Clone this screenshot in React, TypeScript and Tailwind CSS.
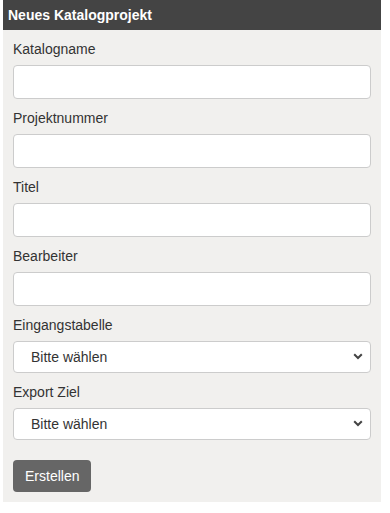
import React from "react";

function Field({ label }: { label: string }) {
  return (
    <div className="mb-[9px]">
      <div className="h-5 leading-5 text-[14px] text-[#333] mb-[6px]">{label}</div>
      <input className="block w-full h-[34px] bg-white border border-[#ccc] rounded-[4px] px-3 text-[14px] outline-none" />
    </div>
  );
}

function SelectField({ label }: { label: string }) {
  return (
    <div className="mb-[9px]">
      <div className="h-5 leading-5 text-[14px] text-[#333] mb-[6px]">{label}</div>
      <div className="relative">
        <select className="block w-full h-[32px] appearance-none bg-white border border-[#ccc] rounded-[4px] pl-[17px] text-[14px] text-[#333] outline-none">
          <option>Bitte wählen</option>
        </select>
        <svg className="absolute right-[8px] top-[12px] pointer-events-none" width="10" height="7" viewBox="0 0 10 7">
          <path d="M1.2 1.2 L5 5 L8.8 1.2" fill="none" stroke="#444" strokeWidth="2" />
        </svg>
      </div>
    </div>
  );
}

export default function App() {
  return (
    <div className="w-[390px] h-[513px] bg-white" style={{ fontFamily: '"Liberation Sans", Arial, sans-serif' }}>
      <div className="ml-[3px] w-[378px] bg-[#f1f0ee]">
        <div className="h-[30px] bg-[#444444] text-white font-bold text-[14px] leading-[30px] pl-[5px]">
          Neues Katalogprojekt
        </div>
        <div className="px-[10px] pt-[9px] pb-[10px]">
          <Field label="Katalogname" />
          <Field label="Projektnummer" />
          <Field label="Titel" />
          <Field label="Bearbeiter" />
          <SelectField label="Eingangstabelle" />
          <SelectField label="Export Ziel" />
          <button className="mt-[11px] h-[32px] px-[12px] bg-[#666] text-white text-[14px] rounded-[4px]">
            Erstellen
          </button>
        </div>
      </div>
    </div>
  );
}
